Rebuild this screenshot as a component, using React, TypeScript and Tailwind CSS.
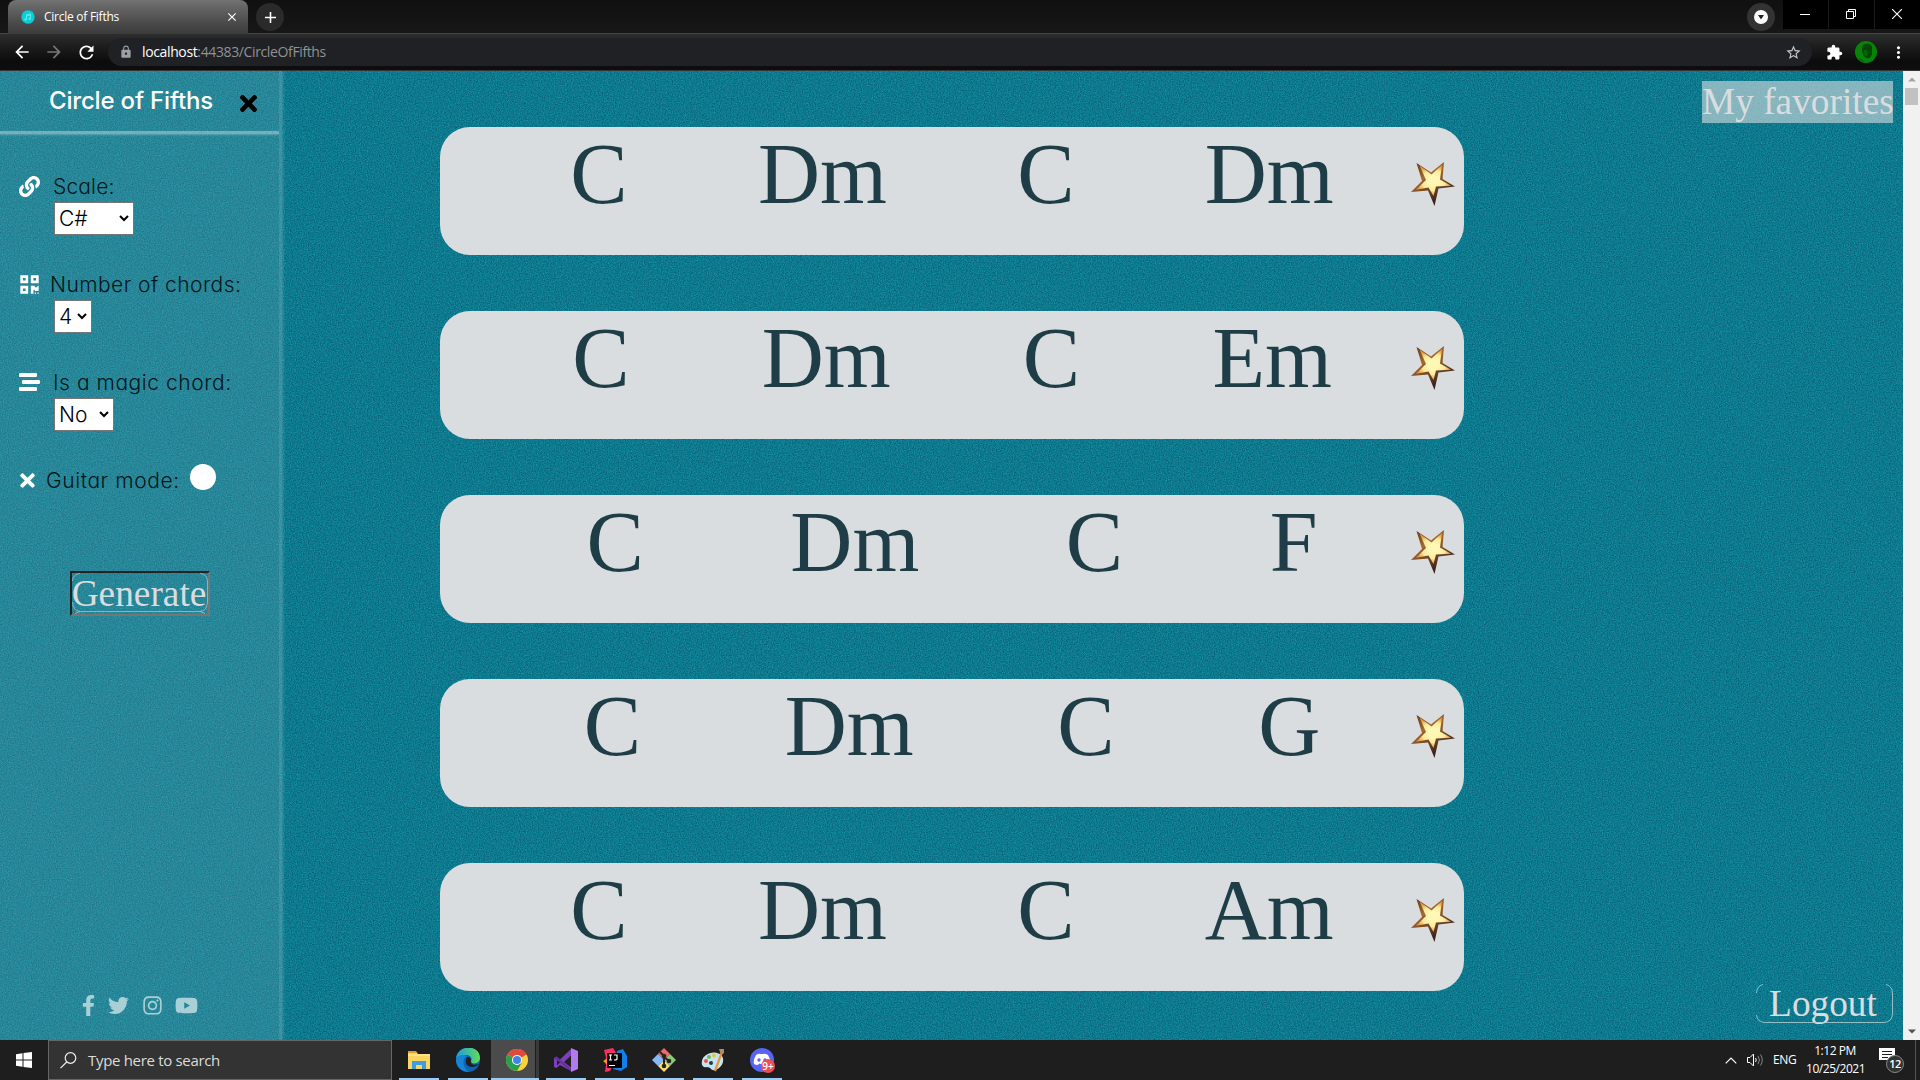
import React from "react";
import { FaLink, FaQrcode, FaTimes, FaFacebookF, FaTwitter, FaInstagram, FaYoutube } from "react-icons/fa";
import { MdArrowBack, MdArrowForward, MdRefresh, MdLock, MdStarBorder, MdExtension, MdMoreVert, MdAdd, MdClose } from "react-icons/md";

const SEGOE = "font-['Open_Sans',sans-serif]";
const POP = "font-['Inter',sans-serif] [font-feature-settings:'cv11','ss03']";
const TIMES = "font-['Liberation_Serif',serif]";

function Grain() {
  return (
    <svg className="absolute inset-0 h-full w-full" aria-hidden="true">
      <filter id="grain" x="0" y="0" width="100%" height="100%" colorInterpolationFilters="sRGB">
        <feTurbulence type="fractalNoise" baseFrequency="0.83" numOctaves="3" seed="4" />
        <feColorMatrix values="0.08 0 0 0 0.015  0.3 0 0 0 0.325  0.3 0 0 0 0.405  0 0 0 0 1" />
      </filter>
      <rect width="100%" height="100%" filter="url(#grain)" />
    </svg>
  );
}

function TabStrip() {
  return (
    <div className="flex h-[33px] bg-gradient-to-b from-[#101010] to-[#171717]">
      <div className="relative ml-2 flex h-[34px] w-[240px] items-center rounded-t-lg bg-gradient-to-b from-[#727272] via-[#545454] via-50% to-[#3b3b3b] pl-[13px] pr-[9px]">
        <svg width="14" height="14" viewBox="0 0 14 14">
          <circle cx="7" cy="7" r="6.7" fill="#08ced6" />
          <path d="M5.5 9.5V4.8l4-1v4.7M5.5 6l4-1" fill="none" stroke="#5ee8ea" />
          <circle cx="4.6" cy="9.5" r="1.2" fill="#5ee8ea" />
          <circle cx="8.6" cy="8.7" r="1.2" fill="#5ee8ea" />
        </svg>
        <span className={`ml-[9px] flex-1 whitespace-nowrap text-[12px] leading-4 tracking-[-0.26px] text-white ${SEGOE}`}>Circle of Fifths</span>
        <MdClose size={14} className="text-white" />
      </div>
      <div className="ml-2 mt-[3px] flex h-7 w-7 items-center justify-center rounded-full bg-[#2a2a2a]">
        <MdAdd size={19} className="text-white" />
      </div>
      <div className="flex-1" />
      <div className="mr-2 mt-[3px] flex h-7 w-7 items-center justify-center rounded-full bg-[#333]">
        <svg width="14" height="14" viewBox="0 0 14 14">
          <circle cx="7" cy="7" r="7" fill="#fff" />
          <path d="M4 5h6L7 9.4z" fill="#222" />
        </svg>
      </div>
      <div className="flex h-[29px] gap-px bg-[#1a1a1a]">
        <div className="flex w-[45px] items-center justify-center bg-black pr-[2px]"><svg width="10" height="10"><path d="M0 4.5h10" stroke="#fff" /></svg></div>
        <div className="flex w-[45px] items-center justify-center bg-black pb-px pr-px">
          <svg width="10" height="10" fill="none" stroke="#fff"><path d="M.5 2.5h7v7h-7zM2.5 2.5v-2h7v7h-2" /></svg>
        </div>
        <div className="flex w-[45px] items-center justify-center bg-black pb-px pr-px"><svg width="10" height="10"><path d="M0 0l10 10M10 0L0 10" stroke="#fff" strokeWidth="1.1" /></svg></div>
      </div>
    </div>
  );
}

function Toolbar() {
  return (
    <div className="flex h-[38px] items-center border-t border-b border-t-[#454545] border-b-[#353535] bg-gradient-to-b from-[#2d2d2d] via-[#0c0c0c] via-75% to-[#0e0e0e]">
      <MdArrowBack size={20} className="ml-[12px] text-white" />
      <MdArrowForward size={20} className="ml-[12px] text-[#777]" />
      <MdRefresh size={21} className="ml-[12px] text-white" />
      <div className="ml-[11px] flex h-7 flex-1 items-center rounded-full bg-[#202125] pl-[11px] pr-[10px]">
        <MdLock size={14} className="text-[#9aa0a6]" />
        <span className={`ml-[9px] flex-1 text-[14px] leading-5 tracking-[-0.37px] text-[#8f9194] ${SEGOE}`}>
          <span className="text-white">localhost</span>:44383/CircleOfFifths
        </span>
        <MdStarBorder size={17} className="text-[#c8c8c8]" />
      </div>
      <MdExtension size={17} className="ml-[14px] text-white" />
      <svg className="ml-[12px]" width="22" height="22" viewBox="0 0 22 22">
        <circle cx="11" cy="11" r="11" fill="#078407" />
        <path d="M7 7c0-5 9-6 10-1v7c-1 3-3 5-5 4-3 0-4-4-5-7z" fill="#034703" />
        <path d="M9 9h3l1 4-2 3-2-3zM2 18c3-1 6 0 7 3M15 17l3 2" fill="#056305" />
      </svg>
      <MdMoreVert size={19} className="ml-[12px] mr-[12px] text-white" />
    </div>
  );
}

function Select({ value, width }: { value: string; width: string }) {
  return (
    <div className={`ml-[54px] flex h-[33px] items-center justify-between border border-[#767676] bg-white pl-1 pr-[4px] text-[21px] font-light leading-none text-black ${width} ${POP}`}>
      <span>{value}</span>
      <svg width="10" height="7" viewBox="0 0 10 7"><path d="M1 1l4 4 4-4" fill="none" stroke="#000" strokeWidth="2" /></svg>
    </div>
  );
}

function Label({ icon, gap, track, children }: { icon: React.ReactNode; gap: string; track: string; children: React.ReactNode }) {
  return (
    <div className="flex h-8 items-center pl-[19px] text-white">
      {icon}
      <span className={`whitespace-nowrap pt-[2px] text-[21px] font-light leading-8 text-[#03161b] ${gap} ${track} ${POP}`}>{children}</span>
    </div>
  );
}

function Bars() {
  return (
    <svg width="21" height="18" viewBox="0 0 21 18" fill="#fff">
      <rect width="18" height="4" rx="1" />
      <rect x="3" y="7" width="18" height="4" rx="1" />
      <rect y="14" width="18" height="4" rx="1" />
    </svg>
  );
}

function Sidebar() {
  return (
    <aside className="relative flex w-[282px] flex-col border-r-[3px] border-[#ffffff18] bg-[#7fb5bd]/23 shadow-[1px_0_3px_rgba(255,255,255,0.2)]">
      <header className="flex h-[60px] items-center pl-[49px]">
        <h1 className={`w-[166px] whitespace-nowrap text-[24px] font-medium tracking-[-0.18px] text-white ${POP}`}>Circle of Fifths</h1>
        <FaTimes size={25} className="ml-[21px] mt-[4px] text-black" />
      </header>
      <div className="h-[3px] bg-white/35 shadow-[0_1px_2px_rgba(255,255,255,0.25)]" />
      <div className="mt-[36px] h-[98px]">
        <Label icon={<FaLink size={21} />} gap="ml-[13px]" track="tracking-[0.15px]">Scale:</Label>
        <Select value="C#" width="w-[80px]" />
      </div>
      <div className="h-[98px]">
        <Label icon={<FaQrcode size={21} />} gap="ml-[10px]" track="tracking-[0.45px]">Number of chords:</Label>
        <Select value="4" width="w-[38px]" />
      </div>
      <div className="h-[98px]">
        <Label icon={<Bars />} gap="ml-[13px]" track="tracking-[0.55px]">Is a magic chord:</Label>
        <Select value="No" width="w-[60px]" />
      </div>
      <div className="flex">
        <Label icon={<FaTimes size={21} className="-ml-[2px]" />} gap="ml-[8px]" track="tracking-[0.6px]">Guitar mode:</Label>
        <div className="absolute left-[190px] top-[393px] h-[26px] w-[26px] rounded-full bg-white" />
      </div>
      <button className={`relative ml-[70px] mt-[75px] h-[45px] w-[140px] border-2 border-b-[#767676] border-l-[#222] border-r-[#767676] border-t-[#222] text-[37.33px] leading-[38px] text-[#d9dddf] ${TIMES}`}>
        <svg className="absolute left-0 top-0" width="136" height="41" fill="none" stroke="#b8ced3" strokeOpacity=".65">
          <path d="M.5 8Q1 1 8 .5M128 .5Q135 1 135.5 8V29Q135 38 128 38.5H8Q1 38 .5 29M3 40.5l5-2M133 40.5l-5-2" />
        </svg>
        <span className="-ml-[2px]">Generate</span>
      </button>
      <div className="absolute bottom-[23px] left-[81px] flex items-center text-[#a9cfd7]">
        <FaFacebookF size={21} className="-ml-[3px]" />
        <FaTwitter size={21} className="ml-[9px]" />
        <FaInstagram size={21} className="ml-[13px]" />
        <FaYoutube size={23} className="ml-[12px]" />
      </div>
    </aside>
  );
}

function Star() {
  return (
    <svg className="absolute right-[9px] top-[34px]" width="44" height="46" viewBox="0 0 44 46">
      <defs>
        <linearGradient id="edge" x1="0" y1="0" x2="0.5" y2="1">
          <stop offset="0" stopColor="#4b3025" />
          <stop offset="0.4" stopColor="#a8692c" />
          <stop offset="1" stopColor="#2e1a1a" />
        </linearGradient>
        <radialGradient id="gold">
          <stop offset="0.3" stopColor="#fff8b4" />
          <stop offset="0.65" stopColor="#fdeaa0" />
          <stop offset="1" stopColor="#e09a3a" />
        </radialGradient>
      </defs>
      <path d="M5.500 2L20 11.500 33 1 31.500 18 44 25.500 27.500 27.500 23.500 45 17 29.500 0 31 11 20z" fill="url(#edge)" />
      <path d="M8.500 4.500L20.500 13.500 31 4 29 18.500 40 24.800 25 25.500 22.500 35 17.500 26.500 5 28.800 15 19z" fill="url(#gold)" />
    </svg>
  );
}

const ROWS = [
  ["C", "Dm", "C", "Dm"],
  ["C", "Dm", "C", "Em"],
  ["C", "Dm", "C", "F"],
  ["C", "Dm", "C", "G"],
  ["C", "Dm", "C", "Am"],
];

function Chords() {
  return (
    <main className="relative ml-[158px] flex w-[1024px] flex-col gap-[56px] pt-[56px]">
      {ROWS.map((row, i) => (
        <div key={i} className={`relative flex h-[128px] justify-evenly rounded-[30px] bg-[#d9dddf] text-[86px] leading-[95px] text-[#1e3d47] ${TIMES}`}>
          {row.map((c, j) => <span key={j}>{c}</span>)}
          <Star />
        </div>
      ))}
    </main>
  );
}

function Scrollbar() {
  return (
    <div className="relative flex w-[17px] flex-col items-center bg-[#f1f1f1]">
      <div className="flex h-[17px] items-center"><svg width="8" height="5"><path d="M0 4.500L4 .5l4 4z" fill="#a3a3a3" /></svg></div>
      <div className="h-[17px] w-[13px] bg-[#c1c1c1]" />
      <div className="flex-1" />
      <div className="flex h-[17px] items-center"><svg width="8" height="5"><path d="M0 .5l4 4 4-4z" fill="#505050" /></svg></div>
    </div>
  );
}

const APPS: React.ReactNode[] = [
  <svg key="f" width="24" height="24" viewBox="0 0 24 24"><path d="M1 4h8l2 2h12v15H1z" fill="#fcd462" /><path d="M1 3h8l1.500 2H1z" fill="#e0a020" /><path d="M1 6h22v2H1z" fill="#ffe08a" /><path d="M5 21v-8h14v8h-4v-4H9v4z" fill="#3c9ede" /></svg>,
  <svg key="e" width="24" height="24" viewBox="0 0 24 24">
    <defs><linearGradient id="eg" x1="0" x2="1"><stop stopColor="#1b9de2" /><stop offset="1" stopColor="#62dc58" /></linearGradient></defs>
    <circle cx="12" cy="12" r="12" fill="#0f62b5" />
    <path d="M0 11C1-4 24-4 24 10c0 6-9 7-9 3 2-3-1-6-5-6-5 0-9 2-10 4z" fill="url(#eg)" />
    <path d="M15 13c-1 3 3 5 8 3-2 2-4 3-7 3-5 0-7-4-6-7 0-2 1-3 2-3 2 0 3 2 3 4z" fill="#202020" />
    <path d="M0 12c1-5 8-6 11-4-5 2-5 11 2 16C5 24 0 18 0 12z" fill="#1685d3" />
  </svg>,
  <svg key="c" width="22" height="22" viewBox="0 0 24 24"><circle cx="12" cy="12" r="12" fill="#ffd03b" /><path d="M12 12L1.600 6A12 12 0 0 1 22.400 6z" fill="#df4a3c" /><path d="M12 12L1.600 6A12 12 0 0 0 12 24l5.200-9z" fill="#2a9f50" /><path d="M12 6.500h10.700A12 12 0 0 0 12 0z" fill="#df4a3c" /><circle cx="12" cy="12" r="5.500" fill="#fff" /><circle cx="12" cy="12" r="4.400" fill="#3f82ee" /></svg>,
  <svg key="v" width="24" height="24" viewBox="0 0 24 24"><path d="M17 1L6 11.500 2.500 8.500 0 10v9l2.500 1L6 17l11 6z" fill="#7d40b8" /><path d="M3 10.500v7l3.500-3.500zM17 7.500L10 14l7 5.500z" fill="#202020" /><path d="M0 10l2.500-1.500L18 22l-1 1z" fill="#5f3297" /><path d="M17 0l7 3v18l-7 3z" fill="#b27bed" /></svg>,
  <svg key="i" width="24" height="24" viewBox="0 0 24 24"><path d="M1 2l9-2 5 8-8 15-5 1 1-7-2-4 2-3z" fill="#f92f66" /><path d="M14 3l6-2 4 7v11l-6 4-8-2z" fill="#147fe8" /><path d="M0 13l4-2v5z" fill="#fc9722" /><path d="M4 5h15v15H4z" fill="#000" /><path d="M6 7h3M7.500 7v5M6 12h3M11 7h3v4q0 1-3 1M6 17.500h6" fill="none" stroke="#fff" strokeWidth="1.200" /></svg>,
  <svg key="g" width="24" height="24" viewBox="0 0 24 24"><path d="M12 0l6 6-6 6-6-6z" fill="#ee6a65" /><path d="M18 6l6 6-6 6-6-6z" fill="#8cca78" /><path d="M6 6l6 6-6 6-6-6z" fill="#83b9f8" /><path d="M12 12l6 6-6 6-6-6z" fill="#fbdd72" /><path d="M8 4l4 4v11M12 9l5 4" fill="none" stroke="#252525" strokeWidth="2" /><circle cx="12" cy="8" r="2.300" fill="#252525" /><circle cx="17" cy="13" r="2.300" fill="#252525" /><circle cx="12" cy="18" r="2.300" fill="#252525" /></svg>,
  <svg key="p" width="24" height="24" viewBox="0 0 24 24"><path d="M1 13C2 6 12 2 19 6c6 4 3 14-5 16-4 1-4-3-8-3-4 1-6-2-5-6z" fill="#c5e4f0" /><circle cx="5" cy="13" r="2" fill="#e45252" /><circle cx="8" cy="9" r="2" fill="#70b958" /><circle cx="13" cy="7.500" r="2" fill="#e9c73d" /><circle cx="10" cy="15" r="2" fill="#25394d" /><path d="M21 4l-7 19" stroke="#e8963d" strokeWidth="2.200" /><path d="M18 1l5 0v4l-3 2z" fill="#b58a62" /></svg>,
  <svg key="d" width="26" height="26" viewBox="0 0 26 26"><circle cx="13" cy="13" r="12" fill="#5865f2" /><path d="M7 8q3-2 5-1h2q2-1 5 1 3 5 2 9-3 2-4 1l-1-1.500q-3 1-6 0L9 18q-3 0-4-1-1-4 2-9z" fill="#fff" /><circle cx="10" cy="13" r="1.700" fill="#5865f2" /><circle cx="16" cy="13" r="1.700" fill="#5865f2" /><circle cx="19" cy="19" r="7" fill="#ed4f51" /><text x="19" y="22.500" textAnchor="middle" fontSize="10" fontWeight="600" fontFamily="Open Sans" fill="#fff">9+</text></svg>,
];

function Taskbar() {
  return (
    <footer className={`flex h-10 bg-[#1e1e1e] text-white ${SEGOE}`}>
      <div className="flex w-12 items-center justify-center">
        <svg width="16" height="16" viewBox="0 0 16 16"><path d="M0 2.200L6.500 1.300V7.500H0zM7.500 1.100L16 0v7.500H7.500zM0 8.500h6.500v6.200L0 13.800zM7.500 8.500H16V16l-8.500-1.100z" fill="#fff" /></svg>
      </div>
      <div className="flex w-[344px] items-center border border-[#666] bg-[#333] pl-[11px]">
        <svg width="17" height="17" fill="none" stroke="#eee" strokeWidth="1.200"><circle cx="10.500" cy="6" r="5.300" /><path d="M6.700 10L.5 16.200" /></svg>
        <span className="ml-[11px] text-[15px] leading-5 tracking-[-0.32px] text-[#dcdcdc]">Type here to search</span>
      </div>
      <div className="ml-[2px] flex">
        {APPS.map((icon, i) => (
          <div key={i} className="relative flex w-[49px] items-center justify-center">
            {i === 2 && <div className="absolute inset-y-0 -left-px w-[44px] bg-[#4b4b4b]" />}
            {i === 2 && <div className="absolute inset-y-0 left-[44px] w-[3px] bg-[#3a3a3a]" />}
            <div className="relative">{icon}</div>
            <div className={`absolute bottom-0 h-[2px] bg-[#99cdf8] ${i === 2 ? "-left-px w-[48px]" : "left-[5px] w-[40px]"}`} />
          </div>
        ))}
      </div>
      <div className="flex-1" />
      <div className="flex items-center">
        <svg width="12" height="7"><path d="M.7 6.300L6 1l5.300 5.300" fill="none" stroke="#fff" strokeWidth="1.200" /></svg>
        <svg className="ml-[10px]" width="16" height="14" fill="none" stroke="#fff"><path d="M.5 4.500h2.500L6.500 1v12L3 9.500H.5zM8.500 5q1.500 2 0 4" /><path d="M11 3q3 4 0 8M13.500 1.500q3.500 5.500 0 11" stroke="#888" /></svg>
        <span className="ml-[10px] w-[23px] text-[12px] tracking-[-0.3px]">ENG</span>
        <div className="ml-[10px] w-[58px] whitespace-nowrap text-center text-[12px] leading-[18px] tracking-[-0.45px]">
          <div>1:12 PM</div>
          <div>10/25/2021</div>
        </div>
        <div className="relative ml-[15px] mr-[10px] h-[26px] w-[26px]">
          <svg width="16" height="16"><path d="M0 1h16v12h-4v3l-3-3H0z" fill="#fff" /><path d="M3 4.500h10M3 7.500h10M3 10.500h6" stroke="#1e1e1e" /></svg>
          <div className="absolute left-[7px] top-[8px] flex h-[18px] w-[18px] items-center justify-center rounded-full border border-[#888] bg-[#333] text-[11px] font-semibold tracking-[-0.5px]">12</div>
        </div>
        <div className="h-10 w-px bg-[#555]" />
        <div className="w-[4px]" />
      </div>
    </footer>
  );
}

export default function App() {
  return (
    <div className="flex h-[1080px] w-[1920px] flex-col overflow-hidden bg-black">
      <TabStrip />
      <Toolbar />
      <div className="relative flex h-[969px] overflow-hidden bg-[#0f7b90]">
        <Grain />
        <Sidebar />
        <Chords />
        <div className={`relative flex flex-1 flex-col items-end justify-between pb-[17px] pr-[10px] pt-[10px] text-[37.33px] text-[#d9dddf] ${TIMES}`}>
          <button className="h-[42px] w-[191px] whitespace-nowrap bg-[#d9dddf]/60 leading-[42px]">My favorites</button>
          <button className="relative h-[39px] w-[137px] leading-[39px]">
            <svg className="absolute inset-0" width="137" height="39" fill="none" stroke="#b8ced3" strokeOpacity=".8">
              <path d="M.5 9Q1 2 7 .5M130 .5Q136.500 2 136.500 10V29Q136.500 38 128 38.500H9Q1 38 .5 31" />
            </svg>
            <span className="-ml-[3px]">Logout</span>
          </button>
        </div>
        <Scrollbar />
      </div>
      <Taskbar />
    </div>
  );
}
